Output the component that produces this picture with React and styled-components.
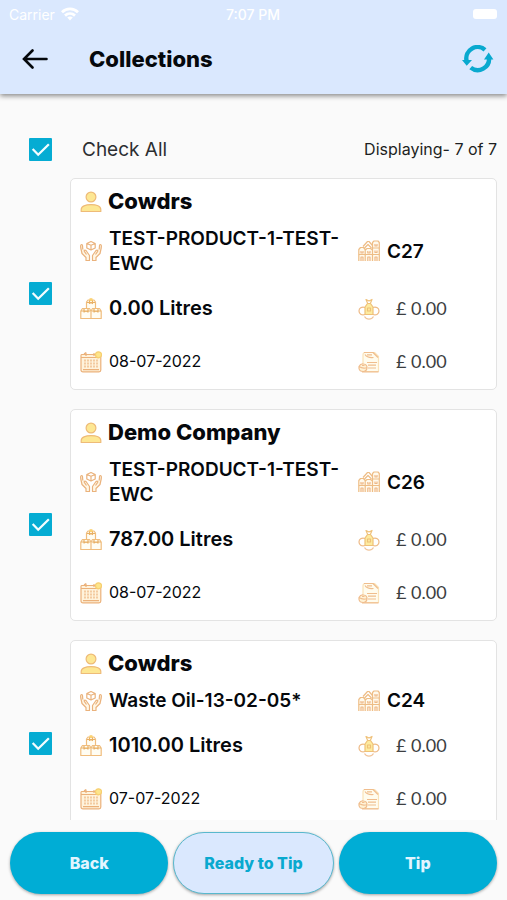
import { useState } from 'react'
import styled, { createGlobalStyle } from 'styled-components'
import React from 'react'

const collections = [
  { id: 27, company: 'Cowdrs', product: 'TEST-PRODUCT-1-TEST-EWC', code: 'C27', quantity: '0.00 Litres', price: '£ 0.00', date: '08-07-2022', vat: '£ 0.00' },
  { id: 26, company: 'Demo Company', product: 'TEST-PRODUCT-1-TEST-EWC', code: 'C26', quantity: '787.00 Litres', price: '£ 0.00', date: '08-07-2022', vat: '£ 0.00' },
  { id: 24, company: 'Cowdrs', product: 'Waste Oil-13-02-05*', code: 'C24', quantity: '1010.00 Litres', price: '£ 0.00', date: '07-07-2022', vat: '£ 0.00' },
]

function WifiIcon() {
  return (
    <svg width="18" height="14" viewBox="0 0 18 14" fill="none" stroke="#fff" strokeWidth="2.8" aria-hidden="true">
      <path d="M1 5.2C5.5 .8 12.5 .8 17 5.2" />
      <path d="M4 8.6C7 5.9 11 5.9 14 8.6" />
      <path d="M9 13.5L6.2 10.6C7.8 9.2 10.2 9.2 11.8 10.6Z" fill="#fff" stroke="none" />
    </svg>
  )
}

function BackIcon() {
  return (
    <svg width="26" height="20" viewBox="0 0 26 20" fill="none" stroke="#05080c" strokeWidth="2.6" strokeLinecap="round" aria-hidden="true">
      <path d="M24.5 10H2.5M10.5 1.5L2 10L10.5 18.5" />
    </svg>
  )
}

function RefreshIcon() {
  return (
    <svg width="32" height="28" viewBox="0 0 32 28" aria-hidden="true">
      <g fill="none" stroke="#09a9cf" strokeWidth="4.4">
        <path d="M4.5 15.5A11.3 11.3 0 0 1 23 4.8" />
        <path d="M27 12.5A11.3 11.3 0 0 1 8.7 22.6" />
      </g>
      <path d="M0 15H10L4.7 20.8Z M22 14.6H31.4L26.7 7.6Z" fill="#09a9cf" />
    </svg>
  )
}

function PersonIcon() {
  return (
    <LineIcon viewBox="0 0 22 22" $color="#eebb78" aria-hidden="true">
      <circle cx="11" cy="6" r="4.9" fill="#fde793" />
      <path d="M1.2 20.5V18.5C1.2 15.3 5.5 13.6 11 13.6S20.8 15.3 20.8 18.5V20.5Z" fill="#fde793" />
    </LineIcon>
  )
}

function HandsIcon() {
  return (
    <LineIcon viewBox="0 0 22 22" $color="#eab27c" aria-hidden="true">
      <path d="M6.8 3.5L11 1.5L15.2 3.5V8L11 10L6.8 8ZM6.8 3.5L11 5.2L15.2 3.5M11 5.2V10" />
      <path d="M1.5 4.5C.6 4.5 .5 6 .8 8L2 13.5L6 17.5V20.5H9.5V15.5L6 10.5C4.8 9.5 3.7 10.5 4.5 11.7L6.5 14.5M2.8 9.5L2.5 5.5Q2.3 4.5 1.5 4.5" fill="#fff7e6" />
      <path d="M20.5 4.5C21.4 4.5 21.5 6 21.2 8L20 13.5L16 17.5V20.5H12.5V15.5L16 10.5C17.2 9.5 18.3 10.5 17.5 11.7L15.5 14.5M19.2 9.5L19.5 5.5Q19.7 4.5 20.5 4.5" fill="#fff7e6" />
    </LineIcon>
  )
}

function BuildingsIcon() {
  return (
    <LineIcon viewBox="0 0 22 22" $color="#eebd86" aria-hidden="true">
      <path d="M.8 21V9.5L2.5 7.5H5.5L7.2 9.5V21M7.2 21V10L9 8.5H12.5L14.5 10V21M14.5 21V2.5L16 1H20L21.3 2.5V21" fill="#fffaee" />
      <path d="M5 6.5L9.5 1.5H11L14.5 5.5M6.5 8L10 4.5L13.5 8M.8 14.5H21.3M14.5 8H21.3" />
      <path d="M3 11V13H5V11M9.8 11V13H12V11M17 10.5V12.5H19V10.5M17 4V6H19V4M3 21V17H5V21M9.8 21V17H12V21M17 21V17H19V21" stroke="#eeb887" />
    </LineIcon>
  )
}

function BoxesIcon() {
  return (
    <LineIcon viewBox="0 0 22 22" $color="#f0bd7d" aria-hidden="true">
      <path d="M6.5 10.5V4L8 2H14L15.5 4V10.5M.8 20.5V13L2.5 10.5H9.5L11 13L12.5 10.5H19.5L21.2 13V20.5ZM11 13V20.5" fill="#fffdf3" />
      <path d="M9.5 2V5.5L11 4.5L12.5 5.5V2M4 11V14L6 13L8 14V11M14 11V14L16 13L18 14V11M1 13H10.5M11.5 13H21M7 4.5H15" stroke="#e8b066" />
      <path d="M10 .8H12V2.5H10Z" fill="#fbe27e" stroke="#fbd071" />
    </LineIcon>
  )
}

function CalendarIcon() {
  return (
    <LineIcon viewBox="0 0 22 22" $color="#ebb17a" aria-hidden="true">
      <path d="M1.5 3.5H19.5Q20.8 3.5 20.8 4.5V19Q20.8 20.8 19 20.8H3Q1 20.8 1 19V4.5Q1 3.5 1.5 3.5Z" fill="#fff3dc" />
      <path d="M1 6.5H20.8M3 18.7H19M6 1.5V5M4 3L6 1.5M14 2V5" />
      <path d="M5 8.5V17M8 8.5V17M11 8.5V17M14 8.5V17M17 8.5V17" strokeDasharray="2 1" />
      <circle cx="18.5" cy="3.8" r="3" fill="#fde58b" stroke="#f7cf70" />
    </LineIcon>
  )
}

function MoneyIcon() {
  return (
    <LineIcon viewBox="0 0 22 22" $color="#efc078" aria-hidden="true">
      <path d="M7 9.5C3.5 8.5 1 10.2 1 13S3.5 17.5 7 16.5M15 9.5C18.500 8.5 21 10.2 21 13S18.500 17.5 15 16.5" stroke="#eeba86" />
      <path d="M9.5 5.500H12.5L15 9V16.5H7V9Z" fill="#fdeb9f" />
      <path d="M9.5 5L8 1.5L11 3L14 1.5L12.5 5M9.5 10H12.5V13H9.5Z" />
      <path d="M6.5 18.5Q8 21.200 11 21.200T15.5 18.5" stroke="#f0c49a" />
    </LineIcon>
  )
}

function TaxIcon() {
  return (
    <LineIcon viewBox="0 0 22 22" $color="#f0bd8d" aria-hidden="true">
      <path d="M5 13V4Q5 1.500 7 1.500H16.500L20.500 5.500V20.500H4" fill="#fffcee" stroke="#fae3b8" />
      <path d="M6 1.500H15L20 6.500M7 3.500Q9 7 15.500 6.500M9 3.800H14M9 11.500H19M10 14.200H18M10 17H18M4 20.800H20.500" />
      <path d="M1 15.500Q2.500 12.500 5.500 13Q9 13.500 9 16.500Q9 20 5.500 20.500Q1.500 20.500 1 17.500ZM1 15.500Q5 18 9 16.500M4 14.500H6.500" fill="#fff3d5" />
    </LineIcon>
  )
}

function CheckMark() {
  return (
    <svg viewBox="0 0 22 22" fill="none" stroke="#f4fdff" strokeWidth="2.2" aria-hidden="true">
      <path d="M3.5 10.5L8.800 16L19 6" />
    </svg>
  )
}

function Tick({ label, checked, onChange }) {
  return (
    <TickBox>
      <input type="checkbox" aria-label={label} checked={checked} onChange={onChange} />
      {checked && <CheckMark />}
    </TickBox>
  )
}

function CollectionCard({ item }) {
  return (
    <Card>
      <Company><PersonIcon />{item.company}</Company>
      <Line $gap="12px">
        <Cell $size="19px" $bold><HandsIcon /><span>{item.product}</span></Cell>
        <Cell $size="19px" $bold><BuildingsIcon />{item.code}</Cell>
      </Line>
      <Line $gap="20px">
        <Cell $size="20px" $bold><BoxesIcon />{item.quantity}</Cell>
        <Price><MoneyIcon />{item.price}</Price>
      </Line>
      <Line $gap="28px">
        <Cell $size="16px"><CalendarIcon />{item.date}</Cell>
        <Price><TaxIcon />{item.vat}</Price>
      </Line>
    </Card>
  )
}

function App() {
  const [checked, setChecked] = useState(collections.map((item) => item.id))
  const allChecked = checked.length === collections.length

  const toggle = (id) => {
    setChecked(checked.includes(id) ? checked.filter((c) => c !== id) : [...checked, id])
  }

  return (
    <Page>
      <GlobalStyle />
      <Header>
        <StatusBar>
          <Carrier>Carrier <WifiIcon /></Carrier>
          <span>7:07 PM</span>
          <Battery />
        </StatusBar>
        <TitleBar>
          <IconButton aria-label="Go back"><BackIcon /></IconButton>
          <h1>Collections</h1>
          <IconButton aria-label="Refresh"><RefreshIcon /></IconButton>
        </TitleBar>
      </Header>

      <Content>
        <CheckAll>
          <Tick
            label="Check All"
            checked={allChecked}
            onChange={() => setChecked(allChecked ? [] : collections.map((item) => item.id))}
          />
          <CheckAllText>Check All</CheckAllText>
          <Count>Displaying- 7 of 7</Count>
        </CheckAll>
        {collections.map((item) => (
          <Row key={item.id}>
            <Tick label={item.code} checked={checked.includes(item.id)} onChange={() => toggle(item.id)} />
            <CollectionCard item={item} />
          </Row>
        ))}
      </Content>

      <Footer>
        <Button>Back</Button>
        <Button $outlined>Ready to Tip</Button>
        <Button>Tip</Button>
      </Footer>
    </Page>
  )
}

const GlobalStyle = createGlobalStyle`
* {
    box-sizing: border-box;
}
body {
    margin: 0;
    background: #fafafa;
    color: #05080c;
    font-family: Inter, "Liberation Sans", sans-serif;
}
button {
    font-family: inherit;
    cursor: pointer;
}
`;

const Page = styled.div`
display: flex;
flex-direction: column;
height: 100vh;
`;

const Header = styled.header`
position: relative;
background: #dae8fe;
box-shadow: 0 2px 5px rgba(0, 0, 0, 0.45);
`;

const StatusBar = styled.div`
display: grid;
grid-template-columns: 1fr auto 1fr;
align-items: center;
height: 28px;
padding: 0 10px 0 9px;
color: #fff;
font-size: 14px;
font-weight: 500;
`;

const Carrier = styled.span`
display: flex;
align-items: center;
gap: 6px;
font-weight: 400;
`;

const Battery = styled.span`
justify-self: end;
width: 24px;
height: 10px;
border-radius: 3px;
background: #fff;
`;

const TitleBar = styled.div`
display: flex;
align-items: center;
height: 66px;
padding: 0 13px 4px 22px;

h1{
    flex: 1;
    margin: 0 0 0 41px;
    font-size: 22px;
    font-weight: 800;
}
`;

const IconButton = styled.button`
display: flex;
padding: 0;
border: 0;
background: none;
`;

const Content = styled.main`
flex: 1;
min-height: 0;
padding: 0 10px 0 29px;
overflow-y: auto;
scrollbar-width: none;
`;

const CheckAll = styled.div`
display: flex;
align-items: center;
height: 84px;
padding-top: 26px;
`;

const CheckAllText = styled.span`
flex: 1;
margin-left: 30px;
color: #2c2e31;
font-size: 19px;
`;

const Count = styled.span`
color: #1d1f22;
font-size: 16px;
`;

const Row = styled.div`
display: flex;
align-items: center;
gap: 18px;
`;

const TickBox = styled.span`
position: relative;
flex: none;
width: 23px;
height: 23px;

input{
    display: block;
    appearance: none;
    width: 100%;
    height: 100%;
    margin: 0;
    border: 2px solid #05acd3;
    border-radius: 1px;
}
input:checked{
    background: #05acd3;
}
svg{
    position: absolute;
    inset: 0;
    pointer-events: none;
}
`;

const Card = styled.article`
flex: 1;
min-width: 0;
margin-bottom: 19px;
padding: 10px 9px 15px;
border: 1px solid #e3e3e3;
border-radius: 5px;
background: #fff;
line-height: 25px;
`;

const LineIcon = styled.svg`
flex: none;
width: 22px;
height: 22px;
fill: none;
stroke: ${(props) => props.$color};
stroke-width: 1.2;
stroke-linejoin: round;
`;

const Company = styled.h2`
display: flex;
align-items: center;
gap: 6px;
margin: 0;
font-size: 22px;
font-weight: 800;
`;

const Line = styled.div`
display: grid;
grid-template-columns: minmax(0, 1fr) 129px;
align-items: center;
margin-top: ${(props) => props.$gap};
`;

const Cell = styled.div`
display: flex;
align-items: center;
gap: 7px;
font-size: ${(props) => props.$size};
font-weight: ${(props) => (props.$bold ? 600 : 400)};
`;

const Price = styled.div`
display: flex;
align-items: center;
gap: 16px;
color: #3c3e41;
font-family: Lato, "Liberation Sans", sans-serif;
font-size: 18px;
`;

const Footer = styled.footer`
display: flex;
gap: 5px;
padding: 12px 10px 6px;
background: #fafafa;
`;

const Button = styled.button`
flex: 1;
height: 62px;
padding: 0;
border: ${(props) => (props.$outlined ? '1px solid #58b8cd' : '0')};
border-radius: 31px;
background: ${(props) => (props.$outlined ? '#dae8fe' : '#00add5')};
box-shadow: 0 1px 3px rgba(0, 0, 0, 0.35);
color: ${(props) => (props.$outlined ? '#09a9cf' : '#e2f5ff')};
font-size: 16px;
font-weight: 800;
`;

export default App
